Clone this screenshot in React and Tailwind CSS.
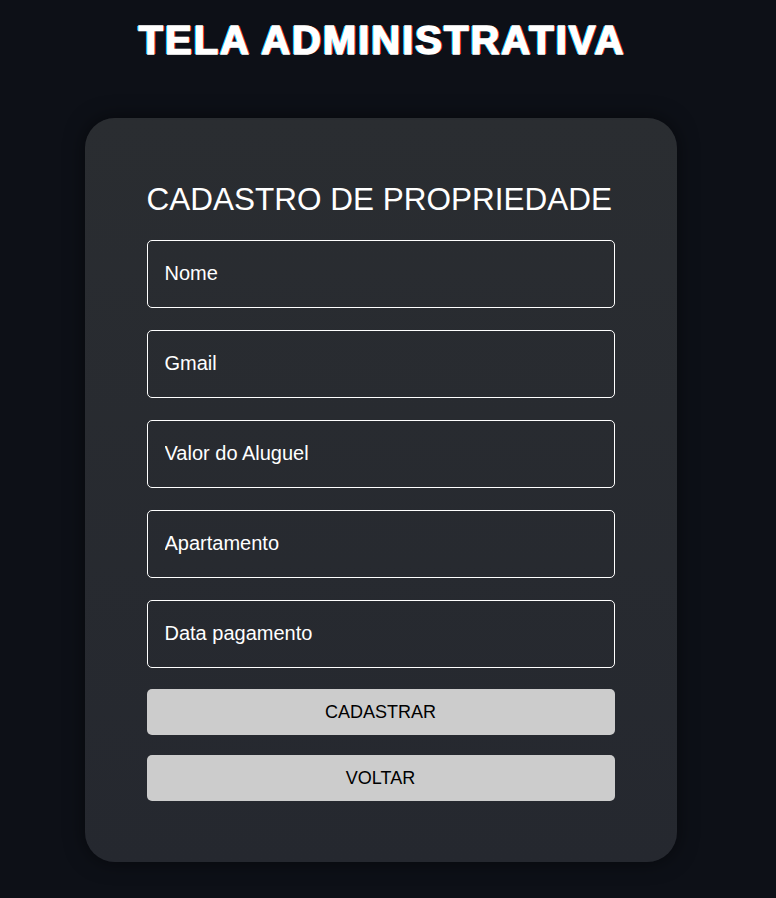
export default function App() {
  const fields = ['Nome', 'Gmail', 'Valor do Aluguel', 'Apartamento', 'Data pagamento']
  return (
    <div className="min-h-[898px] bg-[#0d1017]">
      <div
        className="w-[761px] flex flex-col items-center pb-[36px]"
        style={{ fontFamily: '"Liberation Sans", Arial, sans-serif' }}
      >
        <h1 className="mt-[17px] ml-[3px] text-[40px] leading-[46px] font-bold tracking-[2px] text-white [-webkit-text-stroke:1.5px_white] [text-shadow:-1.5px_0_#00d5ff,1.5px_0_#ff3030]">
          TELA ADMINISTRATIVA
        </h1>
        <div className="mt-[55px] w-[592px] rounded-[30px] bg-gradient-to-b from-[#2a2d31] to-[#25282f] shadow-[0_0_20px_rgba(0,0,0,0.5)] px-[62px] pt-[61px] pb-[61px]">
          <h2 className="text-[31.5px] leading-[40px] whitespace-nowrap text-white">CADASTRO DE PROPRIEDADE</h2>
          <form className="mt-[21px] flex flex-col" onSubmit={e => e.preventDefault()}>
            <div className="flex flex-col gap-[22px]">
              {fields.map(f => (
                <input
                  key={f}
                  placeholder={f}
                  className="h-[68px] w-full rounded-[5px] border border-white bg-transparent px-[17px] pb-[2px] text-[20px] text-white placeholder:text-white outline-none"
                />
              ))}
            </div>
            <button className="mt-[21px] h-[46px] rounded-[5px] bg-[#cccccc] text-[18px] text-black">CADASTRAR</button>
            <button className="mt-[20px] h-[46px] rounded-[5px] bg-[#cccccc] text-[18px] text-black">VOLTAR</button>
          </form>
        </div>
      </div>
    </div>
  )
}
